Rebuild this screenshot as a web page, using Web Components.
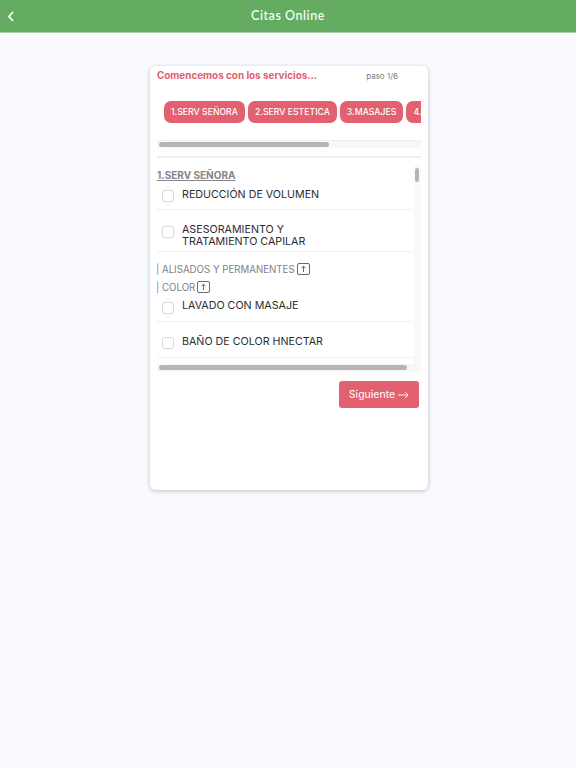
<!DOCTYPE html>
<html lang="es">
<head>
<meta charset="utf-8">
<title>Citas Online</title>
<style>
	html, body { margin: 0; height: 100%; }
	body { background: #f8f9fc; font-family: Inter, "Liberation Sans", sans-serif; }
</style>
</head>
<body>
<app-bar>Citas Online</app-bar>
<wizard-card>
	<span slot="title">Comencemos con los servicios...</span>
	<span slot="step">paso 1/6</span>
	<service-chip slot="chips">1.SERV SEÑORA</service-chip>
	<service-chip slot="chips">2.SERV ESTETICA</service-chip>
	<service-chip slot="chips">3.MASAJES</service-chip>
	<service-chip slot="chips">4.SERV CABALLERO</service-chip>

	<section-title>1.SERV SEÑORA</section-title>
	<service-row style="--h:28px;--t:7px;--b:8px">REDUCCIÓN DE VOLUMEN</service-row>
	<service-row style="--h:42px;--t:14px;--b:16px">ASESORAMIENTO Y<br>TRATAMIENTO CAPILAR</service-row>
	<group-row style="margin-top:8px">| ALISADOS Y PERMANENTES</group-row>
	<group-row>| COLOR</group-row>
	<service-row style="--h:26px;--t:4px;--b:6px">LAVADO CON MASAJE</service-row>
	<service-row style="--h:36px;--t:14px;--b:15px">BAÑO DE COLOR HNECTAR</service-row>

	<next-button slot="action">Siguiente</next-button>
</wizard-card>

<script>
(function () {
	class AppBar extends HTMLElement {
		constructor() {
			super();
			this.attachShadow({ mode: "open" }).innerHTML = `
				<style>
				:host {
					display: flex;
					align-items: center;
					justify-content: center;
					position: relative;
					box-sizing: border-box;
					height: 33px;
					background: #65ac63;
					border-bottom: 1px solid #a9d1a8;
					color: #fff;
					font: 500 12.5px Lato, "Open Sans", sans-serif;
					letter-spacing: .55px;
				}
				svg { position: absolute; left: 7px; top: 11px; }
				span { margin-top: -2px; }
				</style>
				<svg width="8" height="11" viewBox="0 0 8 11" fill="none" stroke="#fff" stroke-width="1.8"><path d="M6 1 L2 5.5 L6 10"/></svg>
				<span><slot></slot></span>
			`;
		}
	}

	class WizardCard extends HTMLElement {
		constructor() {
			super();
			this.attachShadow({ mode: "open" }).innerHTML = `
				<style>
				:host {
					display: block;
					box-sizing: border-box;
					width: 278px;
					height: 424px;
					margin: 33px 0 0 150px;
					padding: 0 7px;
					background: #fff;
					border-radius: 6px;
					box-shadow: 0 1px 4px rgba(60, 64, 80, .3);
				}
				.head { display: flex; justify-content: space-between; align-items: center; height: 18px; padding-top: 1px; }
				.title { color: #e2606f; font-size: 9.9px; font-weight: 700; margin-top: -2px; }
				.step { color: #7d7d82; font-size: 8px; margin-right: 23px; }
				.chips { display: flex; gap: 3px; overflow: hidden; margin-top: 16px; padding-left: 7px; height: 23px; }
				.hbar { height: 8px; margin-top: 16px; background: #f7f7f8; border-top: 1px solid #eeeeef; box-sizing: border-box; padding: 1px 2px; }
				.hbar i { display: block; width: 170px; height: 5px; border-radius: 3px; background: #b4b4b6; }
				.rule { height: 2px; background: #eeeeef; margin-top: 8px; }
				.list { display: flex; height: 199px; margin-top: 7px; }
				.items { flex: 1; min-width: 0; overflow: hidden; padding-top: 3px; }
				.vbar { width: 7px; margin-left: 1px; background: #f9f9fa; padding-top: 3px; box-sizing: border-box; }
				.vbar i { display: block; width: 4px; height: 14px; margin-left: 1px; border-radius: 2px; background: #b4b4b6; }
				.hbar2 { height: 8px; background: #f7f7f8; box-sizing: border-box; padding: 1px 2px; }
				.hbar2 i { display: block; width: 248px; height: 5px; border-radius: 3px; background: #b4b4b6; }
				.action { display: flex; justify-content: flex-end; margin-top: 9px; padding-right: 2px; }
				</style>
				<div class="head">
					<span class="title"><slot name="title"></slot></span>
					<span class="step"><slot name="step"></slot></span>
				</div>
				<div class="chips"><slot name="chips"></slot></div>
				<div class="hbar"><i></i></div>
				<div class="rule"></div>
				<div class="list">
					<div class="items"><slot></slot></div>
					<div class="vbar"><i></i></div>
				</div>
				<div class="hbar2"><i></i></div>
				<div class="action"><slot name="action"></slot></div>
			`;
		}
	}

	class ServiceChip extends HTMLElement {
		constructor() {
			super();
			this.attachShadow({ mode: "open" }).innerHTML = `
				<style>
				:host {
					display: flex;
					align-items: center;
					flex: none;
					height: 22px;
					padding: 0 7px;
					border-radius: 7px;
					background: #e2606f;
					color: #fff;
					font-size: 8.7px;
					font-weight: 500;
					white-space: nowrap;
				}
				</style>
				<slot></slot>
			`;
		}
	}

	class SectionTitle extends HTMLElement {
		constructor() {
			super();
			this.attachShadow({ mode: "open" }).innerHTML = `
				<style>
				:host {
					display: block;
					color: #85858a;
					font-size: 10px;
					font-weight: 700;
					line-height: 14px;
					text-decoration: underline;
				}
				</style>
				<slot></slot>
			`;
		}
	}

	class ServiceRow extends HTMLElement {
		constructor() {
			super();
			this.attachShadow({ mode: "open" }).innerHTML = `
				<style>
				:host {
					display: flex;
					box-sizing: border-box;
					height: var(--h);
					padding-left: 5px;
					border-bottom: 1px solid #f0f0f1;
					color: #2b2b2e;
					font-size: 10.7px;
					line-height: 11.5px;
				}
				.box {
					flex: none;
					width: 12px;
					height: 12px;
					margin-top: var(--b);
					box-sizing: border-box;
					border: 1px solid #d8d8da;
					border-radius: 3px;
					background: #fff;
				}
				.text { margin: var(--t) 0 0 8px; }
				</style>
				<span class="box"></span>
				<span class="text"><slot></slot></span>
			`;
		}
	}

	class GroupRow extends HTMLElement {
		constructor() {
			super();
			this.attachShadow({ mode: "open" }).innerHTML = `
				<style>
				:host {
					display: flex;
					align-items: center;
					gap: 2px;
					height: 18px;
					margin-left: -1px;
					color: #808085;
					font-size: 9.7px;
				}
				svg { flex: none; }
				</style>
				<span><slot></slot></span>
				<svg width="13" height="12" viewBox="0 0 13 12" fill="none" stroke="#6a6a6e" stroke-width="1">
					<rect x=".5" y=".5" width="12" height="11" rx="1.5"/>
					<path d="M6.5 9 V3.2 M4.4 5.2 L6.5 3.2 L8.6 5.2"/>
				</svg>
			`;
		}
	}

	class NextButton extends HTMLElement {
		constructor() {
			super();
			this.attachShadow({ mode: "open" }).innerHTML = `
				<style>
				:host {
					display: flex;
					align-items: center;
					justify-content: center;
					gap: 3px;
					width: 80px;
					height: 27px;
					border-radius: 3px;
					background: #e2606f;
					color: #fff;
					font-size: 10.5px;
				}
				</style>
				<slot></slot>
				<svg width="11" height="8" viewBox="0 0 11 8" fill="none" stroke="#fff" stroke-width=".9"><path d="M0 4 H10 M7 1 L10 4 L7 7"/></svg>
			`;
		}
	}

	customElements.define("app-bar", AppBar);
	customElements.define("wizard-card", WizardCard);
	customElements.define("service-chip", ServiceChip);
	customElements.define("section-title", SectionTitle);
	customElements.define("service-row", ServiceRow);
	customElements.define("group-row", GroupRow);
	customElements.define("next-button", NextButton);
})();
</script>
</body>
</html>
